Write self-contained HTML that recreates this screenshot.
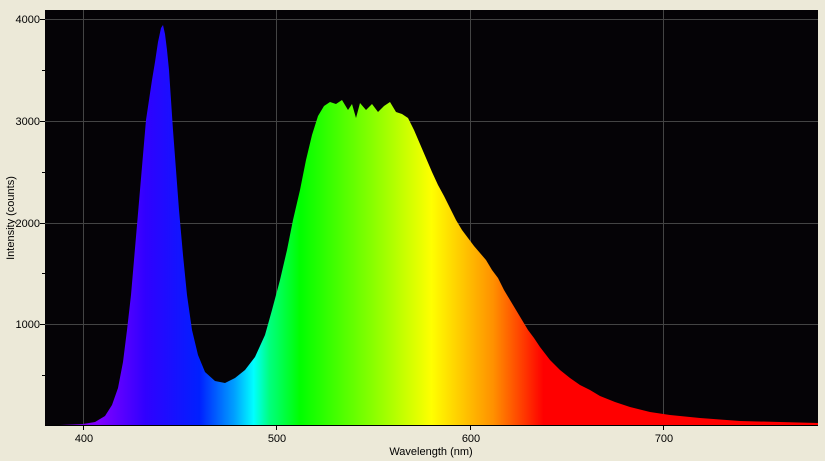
<!DOCTYPE html><html><head><style>
body{margin:0;background:#ece9d8;width:825px;height:461px;overflow:hidden;font-family:"Liberation Sans",sans-serif}
</style></head><body>
<svg width="825" height="461" xmlns="http://www.w3.org/2000/svg" style="position:absolute;left:0;top:0">
<defs><linearGradient id="g" gradientUnits="userSpaceOnUse" x1="45" y1="0" x2="818" y2="0">
<stop offset="0" stop-color="#7000c0"/>
<stop offset="0.07" stop-color="#8000ff"/>
<stop offset="0.13" stop-color="#3000ff"/>
<stop offset="0.2" stop-color="#0020ff"/>
<stop offset="0.245" stop-color="#00a0ff"/>
<stop offset="0.27" stop-color="#00ffff"/>
<stop offset="0.29" stop-color="#00ff80"/>
<stop offset="0.33" stop-color="#00ff00"/>
<stop offset="0.44" stop-color="#a0ff00"/>
<stop offset="0.5" stop-color="#ffff00"/>
<stop offset="0.58" stop-color="#ff9000"/>
<stop offset="0.645" stop-color="#ff0000"/>
<stop offset="1" stop-color="#ff0000"/>
</linearGradient></defs>
<rect x="45" y="10" width="773" height="416" fill="#050306"/>
<g stroke="#444" stroke-width="1">
<line x1="83.5" y1="10" x2="83.5" y2="425"/><line x1="276.5" y1="10" x2="276.5" y2="425"/><line x1="470.5" y1="10" x2="470.5" y2="425"/><line x1="663.5" y1="10" x2="663.5" y2="425"/>
<line x1="45" y1="19.5" x2="818" y2="19.5"/><line x1="45" y1="121.5" x2="818" y2="121.5"/><line x1="45" y1="223.5" x2="818" y2="223.5"/><line x1="45" y1="324.5" x2="818" y2="324.5"/>
</g>
<polygon fill="url(#g)" points="60,425 83,424 95,422 105,416 112,405 118,388 123,362 127,330 131,295 134,260 137,225 140,190 143,155 146,120 149,100 152,80 155,62 158,42 161,28 163,25 165,34 167,50 169,70 171,100 173,130 176,170 179,210 183,255 187,295 192,330 198,355 205,372 215,381 225,383 235,378 245,370 255,357 265,335 272,310 280,280 287,250 293,220 300,190 306,160 312,135 318,116 324,106 330,102 336,104 342,100 348,110 352,104 356,118 360,103 366,110 372,104 378,112 384,106 390,102 396,112 402,114 408,118 414,130 420,144 426,158 432,172 438,185 444,196 450,208 456,220 462,230 468,238 474,246 480,253 486,260 492,270 498,278 504,290 510,300 516,310 522,320 528,330 534,338 540,347 550,360 560,370 570,378 580,385 590,390 600,396 615,402 630,407 650,412 670,415 700,418 740,421 780,422 818,423 818,425"/>
<line x1="45" y1="425.5" x2="818" y2="425.5" stroke="#000"/>
<g stroke="#000"><line x1="40" y1="19.5" x2="45" y2="19.5"/><line x1="40" y1="121.5" x2="45" y2="121.5"/><line x1="40" y1="223.5" x2="45" y2="223.5"/><line x1="40" y1="324.5" x2="45" y2="324.5"/>
<line x1="42" y1="172.5" x2="45" y2="172.5"/><line x1="42" y1="273.5" x2="45" y2="273.5"/><line x1="42" y1="70.5" x2="45" y2="70.5"/><line x1="42" y1="375.5" x2="45" y2="375.5"/>
<line x1="83.5" y1="425" x2="83.5" y2="430"/><line x1="276.5" y1="425" x2="276.5" y2="430"/><line x1="470.5" y1="425" x2="470.5" y2="430"/><line x1="663.5" y1="425" x2="663.5" y2="430"/></g>
<g font-size="11" fill="#000" text-anchor="end">
<text x="40" y="23">4000</text><text x="40" y="125">3000</text><text x="40" y="227">2000</text><text x="40" y="328">1000</text></g>
<g font-size="11" fill="#000" text-anchor="middle">
<text x="84" y="442">400</text><text x="277" y="442">500</text><text x="471" y="442">600</text><text x="664" y="442">700</text>
<text x="431" y="455">Wavelength (nm)</text>
<text transform="translate(14,218) rotate(-90)">Intensity (counts)</text></g>
</svg></body></html>
